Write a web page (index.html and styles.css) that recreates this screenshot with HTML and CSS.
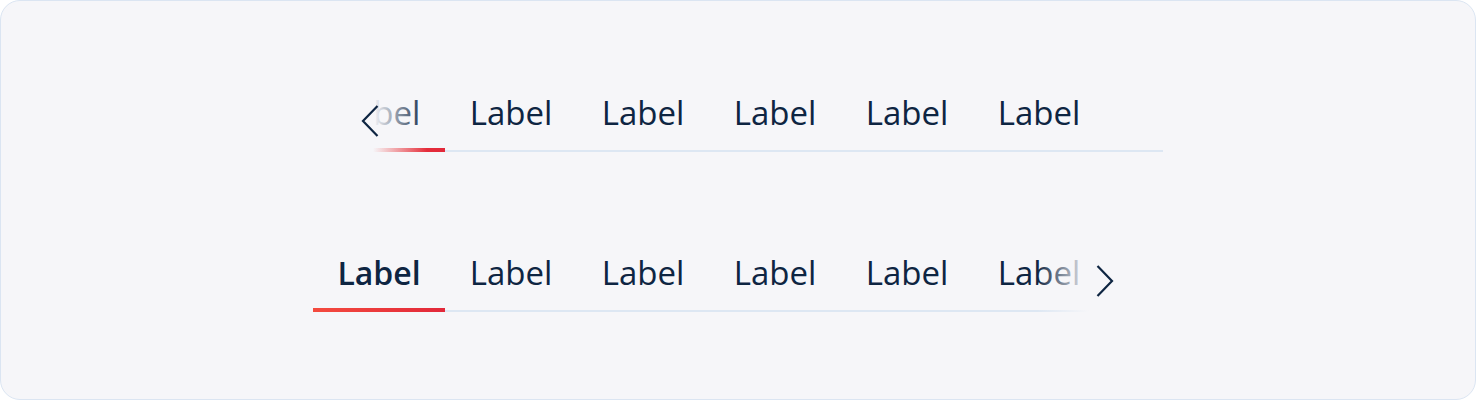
FILE: index.html
```html
<!DOCTYPE html>
<html lang="en">
<head>
<meta charset="utf-8">
<title>Tabs</title>
<link rel="stylesheet" href="styles.css">
</head>
<body>
<div class="frame">
  <div class="tabs">
    <div class="tab-list">
      <div class="tab active">Label</div>
      <div class="tab">Label</div>
      <div class="tab">Label</div>
      <div class="tab">Label</div>
      <div class="tab">Label</div>
      <div class="tab">Label</div>
    </div>
    <div class="fade fade-left">
      <svg class="chev" width="20" height="34" viewBox="0 0 20 34"><polyline points="17.5,2 3,17 17.5,32" fill="none" stroke="#0e2542" stroke-width="2.2"/></svg>
    </div>
  </div>
  <div class="tabs">
    <div class="tab-list">
      <div class="tab active bold">Label</div>
      <div class="tab">Label</div>
      <div class="tab">Label</div>
      <div class="tab">Label</div>
      <div class="tab">Label</div>
      <div class="tab">Label</div>
    </div>
    <div class="fade fade-right">
      <svg class="chev" width="20" height="34" viewBox="0 0 20 34"><polyline points="2.5,2 17,17 2.5,32" fill="none" stroke="#0e2542" stroke-width="2.2"/></svg>
    </div>
  </div>
</div>
</body>
</html>
```

FILE: styles.css
```css
* { box-sizing: border-box; }
html, body { margin: 0; padding: 0; background: #ffffff; }
body { width: 1476px; height: 400px; }

.frame {
  width: 1476px;
  height: 400px;
  border: 1px solid #dbe5f2;
  border-radius: 20px;
  background: #f6f6f9;
  display: flex;
  flex-direction: column;
  align-items: center;
  padding-top: 95px;
  gap: 104px;
  font-family: "Open Sans", "Noto Sans", sans-serif;
  color: #0e2542;
}

.tabs {
  position: relative;
  width: 850px;
  height: 56px;
  border-bottom: 2px solid #dde7f3;
}

.tab-list {
  display: flex;
  height: 54px;
}

.tab {
  position: relative;
  width: 132px;
  flex: none;
  padding-top: 1px;
  text-align: center;
  font-size: 33px;
  line-height: 32px;
  font-weight: 400;
}

.tab.bold { font-weight: 600; font-size: 32px; }

.tab.active::after {
  content: "";
  position: absolute;
  left: 0;
  right: 0;
  bottom: -2px;
  height: 4px;
  background: linear-gradient(90deg, #f44b3f, #e2283a);
}

.fade {
  position: absolute;
  top: 0;
  bottom: -2px;
  display: flex;
  align-items: flex-start;
}

.fade-left {
  left: 0;
  width: 124px;
  background: linear-gradient(90deg, #f6f6f9 0, #f6f6f9 60px, rgba(246,246,249,0) 114px);
}
.fade-left .chev { margin-left: 47px; margin-top: 8px; }

.fade-right {
  right: 0;
  width: 126px;
  background: linear-gradient(90deg, rgba(246,246,249,0) 0, #f6f6f9 52px, #f6f6f9 100%);
}
.fade-right .chev { margin-left: 58px; margin-top: 8px; }
```
